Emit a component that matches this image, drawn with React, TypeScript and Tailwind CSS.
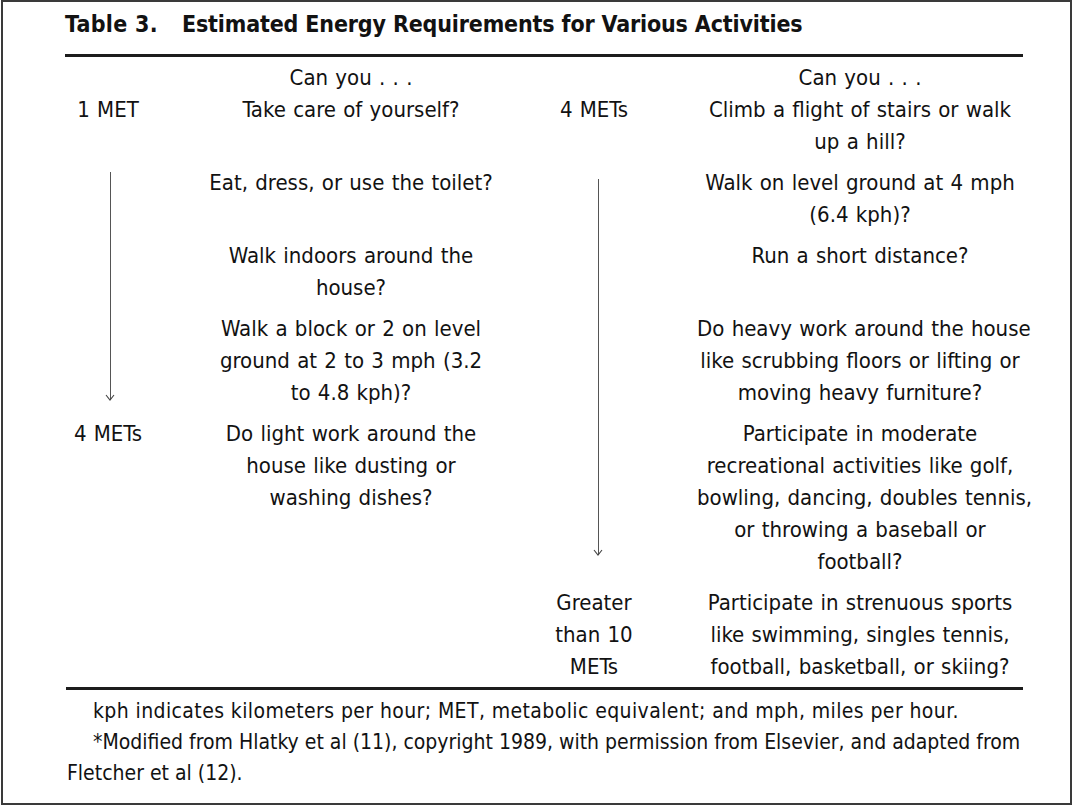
import React from "react";

type Cell = { row: string; col: string; lines: string[] };

const cells: Cell[] = [
  { row: "row-start-1", col: "col-start-1", lines: ["1 MET"] },
  { row: "row-start-1", col: "col-start-2", lines: ["Take care of yourself?"] },
  { row: "row-start-1", col: "col-start-3", lines: ["4 METs"] },
  { row: "row-start-1", col: "col-start-4", lines: ["Climb a flight of stairs or walk", "up a hill?"] },
  { row: "row-start-2", col: "col-start-2", lines: ["Eat, dress, or use the toilet?"] },
  { row: "row-start-2", col: "col-start-4", lines: ["Walk on level ground at 4 mph", "(6.4 kph)?"] },
  { row: "row-start-3", col: "col-start-2", lines: ["Walk indoors around the", "house?"] },
  { row: "row-start-3", col: "col-start-4", lines: ["Run a short distance?"] },
  { row: "row-start-4", col: "col-start-2", lines: ["Walk a block or 2 on level", "ground at 2 to 3 mph (3.2", "to 4.8 kph)?"] },
  {
    row: "row-start-4",
    col: "col-start-4",
    lines: ["Do heavy work around the house", "like scrubbing floors or lifting or", "moving heavy furniture?"],
  },
  { row: "row-start-5", col: "col-start-1", lines: ["4 METs"] },
  { row: "row-start-5", col: "col-start-2", lines: ["Do light work around the", "house like dusting or", "washing dishes?"] },
  {
    row: "row-start-5",
    col: "col-start-4",
    lines: [
      "Participate in moderate",
      "recreational activities like golf,",
      "bowling, dancing, doubles tennis,",
      "or throwing a baseball or",
      "football?",
    ],
  },
  { row: "row-start-6", col: "col-start-3", lines: ["Greater", "than 10", "METs"] },
  {
    row: "row-start-6",
    col: "col-start-4",
    lines: ["Participate in strenuous sports", "like swimming, singles tennis,", "football, basketball, or skiing?"],
  },
];

function DownArrow({ className }: { className: string }) {
  return (
    <div className={`flex flex-col items-center ${className}`}>
      <div className="w-px flex-1 bg-[#555]" />
      <svg width="10" height="7" viewBox="0 0 10 7" className="-mt-[6px]">
        <path d="M1 1 L5 6 L9 1" fill="none" stroke="#444" strokeWidth="1.1" />
      </svg>
    </div>
  );
}

export default function App() {
  return (
    <div className="w-[1073px] h-[806px] overflow-hidden bg-white font-['DejaVu_Sans_Condensed','DejaVu_Sans',sans-serif] text-[#121212]">
      <div className="ml-px w-[1071px] h-[805px] border-2 border-[#3a3a3a] pl-[62px] pt-[6px]">
        <div className="w-[958px]">
          {/* Title */}
          <h1 className="flex font-bold text-[23px] leading-[32px] tracking-[0.3px] whitespace-nowrap">
            <span>Table 3.</span>
            <span className="ml-[24px] tracking-[-0.15px]">Estimated Energy Requirements for Various Activities</span>
          </h1>

          <div className="mt-[14px] h-[3px] bg-[#1c1c1c]" />

          {/* Column heading */}
          <div className="mt-[5px] grid grid-cols-[86px_400px_86px_386px] text-[22px] leading-[32px] [word-spacing:1px] text-center whitespace-nowrap">
            <div className="col-start-2">Can you . . .</div>
            <div className="col-start-4 pl-[60px]">Can you . . .</div>
          </div>

          {/* Body */}
          <div className="grid grid-cols-[86px_400px_86px_386px] gap-y-[9px] text-[22px] leading-[32px] [word-spacing:1px] text-center whitespace-nowrap">
            {cells.map((c, i) => (
              <div key={i} className={`${c.row} ${c.col} ${c.col === "col-start-4" ? "pl-[60px]" : ""}`}>
                {c.lines.map((l, j) => (
                  <div key={j}>{l}</div>
                ))}
              </div>
            ))}
            <DownArrow className="row-start-2 row-span-3 col-start-1 pl-[4px] pt-[5px] pb-[8px]" />
            <DownArrow className="row-start-2 row-span-4 col-start-3 pl-[8px] pt-[12px] pb-[22px]" />
          </div>

          <div className="mt-[4px] ml-px h-[3px] bg-[#1c1c1c]" />

          {/* Footnotes */}
          <div className="mt-[6px] ml-[2px] text-[21px] leading-[31px] whitespace-nowrap">
            <p className="pl-[26px] tracking-[0.4px]">
              kph indicates kilometers per hour; MET, metabolic equivalent; and mph, miles per hour.
            </p>
            <p className="pl-[26px]">
              *Modified from Hlatky et al (11), copyright 1989, with permission from Elsevier, and adapted from
            </p>
            <p>Fletcher et al (12).</p>
          </div>
        </div>
      </div>
    </div>
  );
}
